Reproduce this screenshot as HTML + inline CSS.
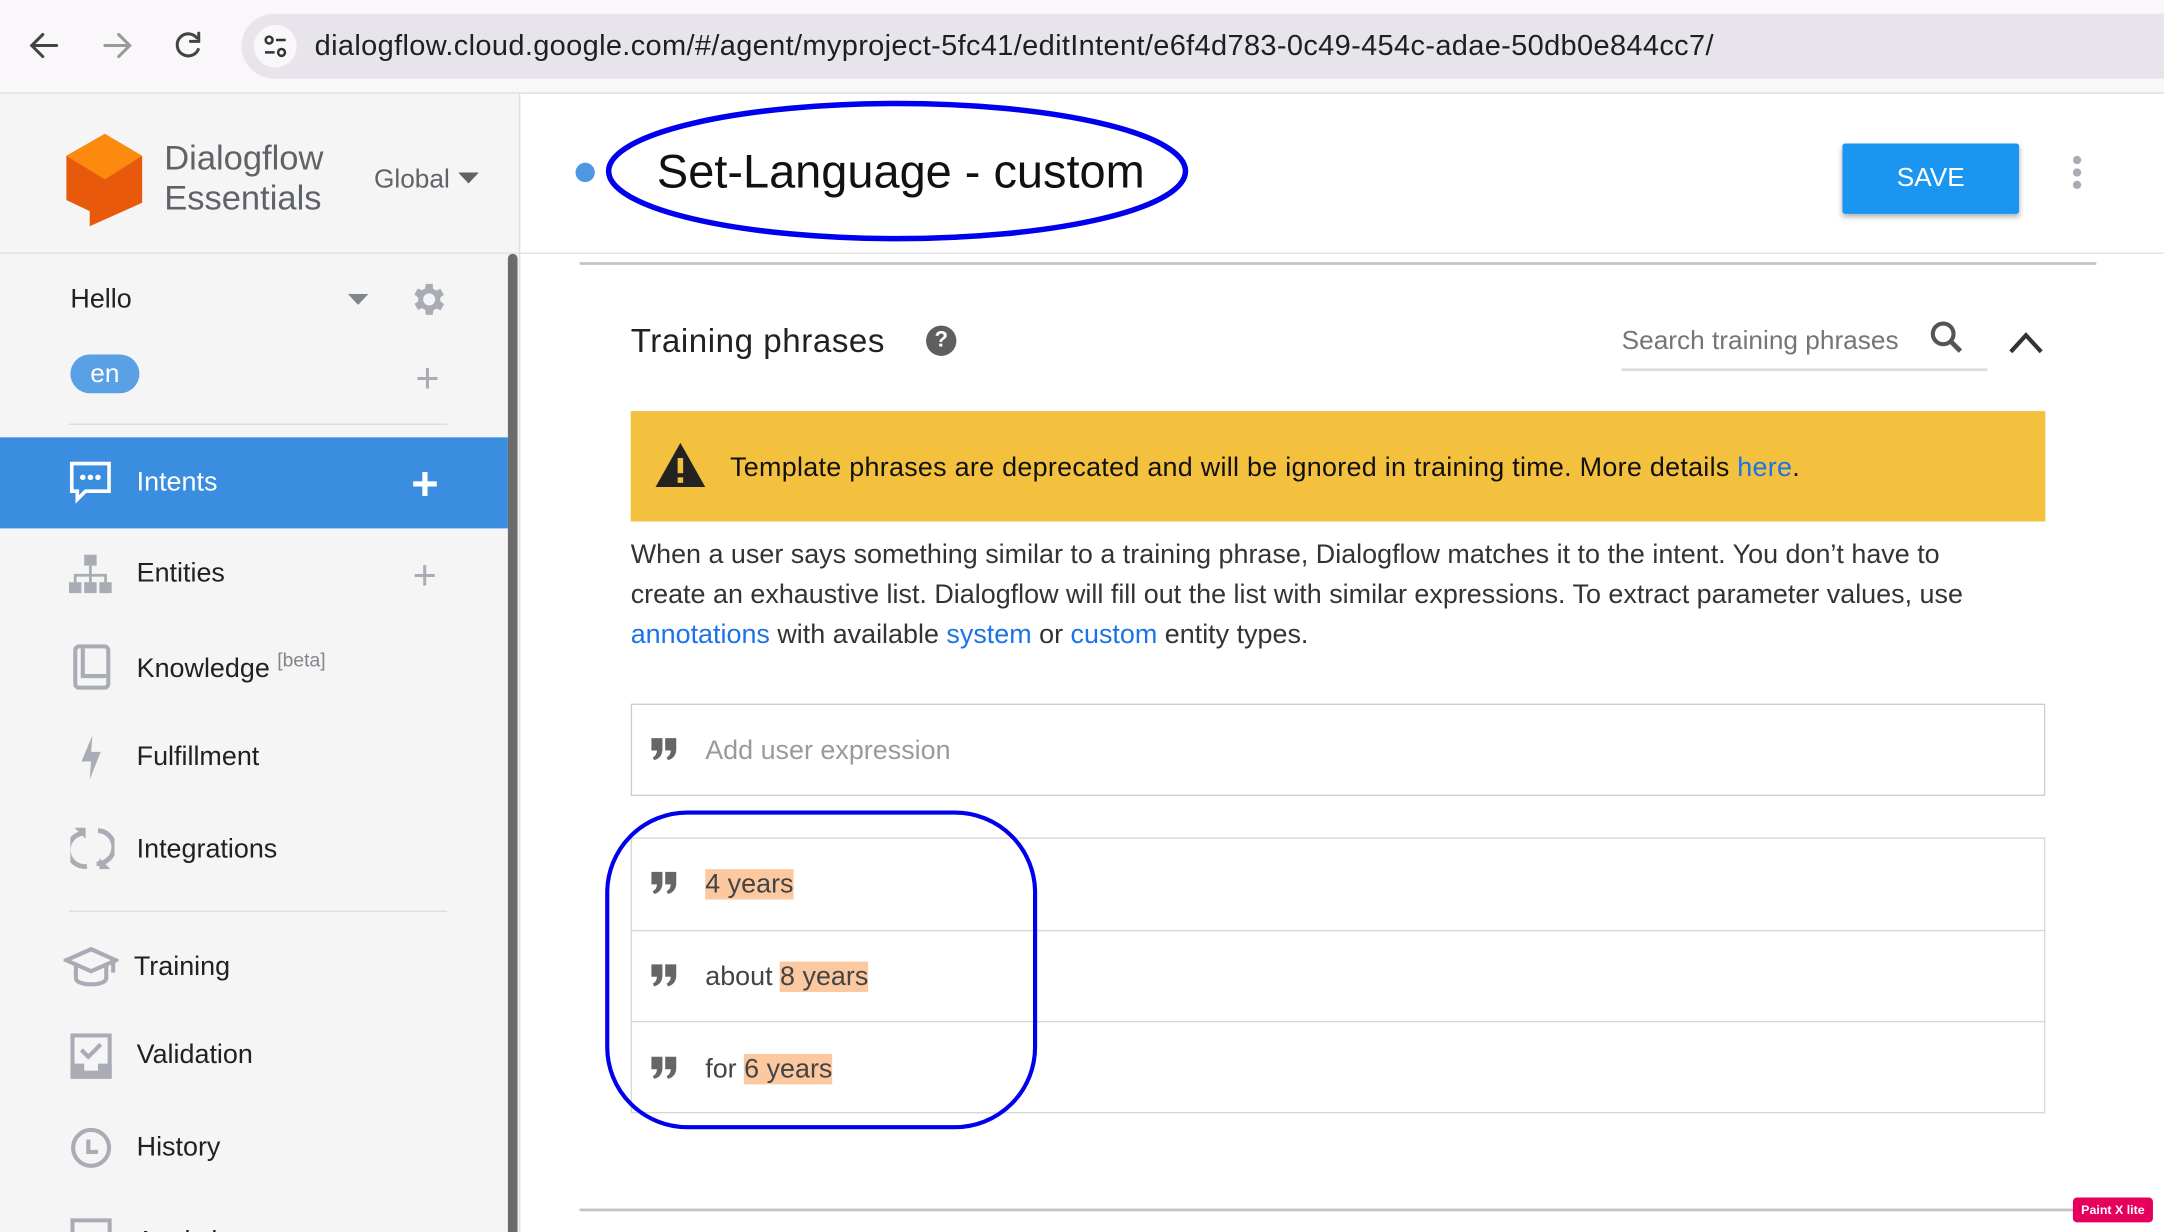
<!DOCTYPE html>
<html><head><meta charset="utf-8"><style>
html,body{margin:0;padding:0;width:2164px;height:1232px;overflow:hidden;background:#fff}
#w{position:absolute;left:0;top:0;width:1568px;height:893px;transform:scale(1.38010,1.37962);transform-origin:0 0;font-family:"Liberation Sans",sans-serif;overflow:hidden}
.a{position:absolute;white-space:nowrap}
.nav{position:absolute;left:99px;font-size:19.5px;color:#202124;transform:translateY(-45%)}
.ic{position:absolute}
.q{position:absolute;left:471px}
.hl{background:#fcc8a0}
</style></head><body><div id="w">
<svg width="0" height="0" style="position:absolute"><defs><symbol id="qq" viewBox="0 0 20 18"><path d="M1 1h8v8c0 4-2 7-6 8l-1-2c2-1 3-3 3-5H1z M11 1h8v8c0 4-2 7-6 8l-1-2c2-1 3-3 3-5h-4z" fill="#666"/></symbol></defs></svg>
<!-- browser bar -->
<div class="a" style="left:0;top:0;width:1568px;height:67px;background:#f9f7fa;border-bottom:1px solid #dedcdf"></div>
<svg class="ic" style="left:0;top:0" width="175" height="67"><g stroke="#444" stroke-width="2.2" fill="none" stroke-linecap="round"><path d="M41 33H24M31 25l-8 8 8 8"/></g><g stroke="#999" stroke-width="2.2" fill="none" stroke-linecap="round"><path d="M76 33h17M86 25l8 8-8 8"/></g><g stroke="#444" stroke-width="2.2" fill="none"><path d="M143 28a8 8 0 1 0 1 7"/><path d="M144 24v6h-6" stroke-linecap="round"/></g></svg>
<div class="a" style="left:175px;top:10px;width:1420px;height:47px;border-radius:24px;background:#e7e5eb"></div>
<div class="a" style="left:184px;top:18px;width:31px;height:31px;border-radius:50%;background:#f9f7fa"></div>
<svg class="ic" style="left:184px;top:18px" width="31" height="31"><g stroke="#333" stroke-width="1.8" fill="none"><circle cx="11" cy="11" r="2.5"/><path d="M16 11h7M8 20h7"/><circle cx="20" cy="20" r="2.5"/></g></svg>
<div class="a" style="left:228px;top:22px;font-size:21px;color:#1f1f1f;letter-spacing:0.25px">dialogflow.cloud.google.com/#/agent/myproject-5fc41/editIntent/e6f4d783-0c49-454c-adae-50db0e844cc7/</div>
<!-- sidebar -->
<div class="a" style="left:0;top:68px;width:376px;height:825px;background:#f5f5f5;border-right:1px solid #e0e0e0"></div>
<div class="a" style="left:0;top:183px;width:376px;height:1px;background:#e0e0e0"></div>
<svg class="ic" style="left:48px;top:97px" width="56" height="70"><path d="M28 0L55 16V50L17 67V56L0 48V16Z" fill="#e8590c"/><path d="M28 0L55 16 28 33 0 16Z" fill="#fb8a0f"/></svg>
<div class="a" style="left:119px;top:101px;font-size:25px;line-height:29px;color:#5f6368">Dialogflow<br>Essentials</div>
<div class="a" style="left:271px;top:120px;font-size:19px;color:#5f6368">Global</div>
<svg class="ic" style="left:332px;top:125px" width="16" height="10"><path d="M0 0h15L7.5 8z" fill="#5f6368"/></svg>
<div class="a" style="left:51px;top:206px;font-size:19.5px;color:#202124">Hello</div>
<svg class="ic" style="left:252px;top:213px" width="16" height="10"><path d="M0 0h15L7.5 8z" fill="#80868b"/></svg>
<svg class="ic" style="left:296px;top:202px" width="30" height="30" viewBox="0 0 24 24"><path fill="#a9acb4" d="M19.4 13a7.5 7.5 0 0 0 0-2l2.1-1.6-2-3.5-2.5 1a7 7 0 0 0-1.7-1L15 3h-4l-.4 2.7a7 7 0 0 0-1.7 1l-2.5-1-2 3.5L6.6 11a7.5 7.5 0 0 0 0 2l-2.1 1.6 2 3.5 2.5-1a7 7 0 0 0 1.7 1L11 21h4l.4-2.7a7 7 0 0 0 1.7-1l2.5 1 2-3.5zM13 15.5a3.5 3.5 0 1 1 0-7 3.5 3.5 0 0 1 0 7z" transform="translate(-1 0)"/></svg>
<div class="a" style="left:51px;top:257px;width:50px;height:28px;border-radius:14px;background:#5aa0e5;color:#fff;font-size:19px;text-align:center;line-height:29px">en</div>
<div class="a" style="left:301px;top:260px;font-size:30px;line-height:30px;color:#a9acb4">+</div>
<div class="a" style="left:50px;top:307px;width:274px;height:1px;background:#dcdcdc"></div>
<div class="a" style="left:0;top:317px;width:368px;height:66px;background:#3b8edf"></div>
<svg class="ic" style="left:50px;top:334px" width="31" height="31" viewBox="0 0 31 31"><path d="M2 2h27v20H12l-6 6v-6H2z" fill="none" stroke="#fff" stroke-width="2.6"/><circle cx="10" cy="12" r="2" fill="#fff"/><circle cx="15.5" cy="12" r="2" fill="#fff"/><circle cx="21" cy="12" r="2" fill="#fff"/></svg>
<div class="nav" style="top:349px;color:#fff">Intents</div>
<div class="a" style="left:298px;top:334px;font-size:34px;line-height:34px;color:#fff;font-weight:bold">+</div>
<svg class="ic" style="left:50px;top:402px" width="31" height="28"><g fill="#a9acb4"><rect x="11" y="0" width="9" height="8"/><rect x="0" y="20" width="9" height="8"/><rect x="11" y="20" width="9" height="8"/><rect x="22" y="20" width="9" height="8"/><path d="M14.5 8h2v6h11v6h-2v-4h-9v4h-2v-4h-9v4h-2v-6h11z"/></g></svg>
<div class="nav" style="top:415px">Entities</div>
<div class="a" style="left:299px;top:403px;font-size:30px;line-height:30px;color:#a9acb4">+</div>
<svg class="ic" style="left:53px;top:467px" width="27" height="33"><rect x="1.5" y="1.5" width="24" height="30" rx="3" fill="none" stroke="#a9acb4" stroke-width="3"/><path d="M7 3v20h17" fill="none" stroke="#a9acb4" stroke-width="3"/></svg>
<div class="nav" style="top:482px">Knowledge <sup style="font-size:14px;color:#80868b">[beta]</sup></div>
<svg class="ic" style="left:58px;top:533px" width="16" height="32"><path d="M9 0L1 19h7l-1 13 8-20H8z" fill="#a9acb4"/></svg>
<div class="nav" style="top:548px">Fulfillment</div>
<svg class="ic" style="left:51px;top:598px" width="32" height="34"><g fill="none" stroke="#a9acb4" stroke-width="3.5"><path d="M9 6a12 12 0 0 0 3 24"/><path d="M20 4a12 12 0 0 1-1 24"/></g><path d="M3 2h8v8z M29 32h-8v-8z" fill="#a9acb4"/></svg>
<div class="nav" style="top:615px">Integrations</div>
<div class="a" style="left:50px;top:660px;width:274px;height:1px;background:#dcdcdc"></div>
<svg class="ic" style="left:46px;top:686px" width="40" height="33"><path d="M20 2L2 10l18 8 18-8z" fill="none" stroke="#a9acb4" stroke-width="3"/><path d="M9 14v9c0 6 22 6 22 0v-9" fill="none" stroke="#a9acb4" stroke-width="3"/><path d="M36 10v9" stroke="#a9acb4" stroke-width="3"/></svg>
<div class="nav" style="left:97px;top:700px">Training</div>
<svg class="ic" style="left:51px;top:749px" width="30" height="33"><rect x="1.5" y="1.5" width="27" height="30" fill="none" stroke="#a9acb4" stroke-width="3"/><path d="M0 22h10v5h10v-5h10v11H0z" fill="#a9acb4"/><path d="M8 12l5 5 9-9" fill="none" stroke="#a9acb4" stroke-width="3"/></svg>
<div class="nav" style="top:764px">Validation</div>
<svg class="ic" style="left:51px;top:816px" width="30" height="33"><circle cx="15" cy="16" r="13" fill="none" stroke="#a9acb4" stroke-width="3"/><path d="M13 10v9h7" fill="none" stroke="#a9acb4" stroke-width="3"/></svg>
<div class="nav" style="top:831px">History</div>
<svg class="ic" style="left:51px;top:883px" width="30" height="12"><rect x="1.5" y="1.5" width="27" height="30" fill="none" stroke="#a9acb4" stroke-width="3"/></svg>
<div class="nav" style="top:899px">Analytics</div>
<div class="a" style="left:368px;top:184px;width:7px;height:720px;border-radius:4px;background:#6b6b6b"></div>
<!-- main header -->
<div class="a" style="left:377px;top:183px;width:1191px;height:1px;background:#e0e0e0"></div>
<div class="a" style="left:417px;top:118px;width:14px;height:14px;border-radius:50%;background:#4e97e3"></div>
<div class="a" style="left:476px;top:106px;font-size:34px;color:#111">Set-Language - custom</div>
<svg class="ic" style="left:430px;top:70px" width="440" height="112"><ellipse cx="220" cy="54" rx="209" ry="49" fill="none" stroke="#0000ee" stroke-width="4"/></svg>
<div class="a" style="left:1335px;top:104px;width:128px;height:51px;background:#1a96f0;border-radius:2px;box-shadow:0 2px 4px rgba(0,0,0,.3);color:#fff;font-size:19px;text-align:center;line-height:52px">SAVE</div>
<svg class="ic" style="left:1500px;top:112px" width="10" height="26"><circle cx="5" cy="4" r="3" fill="#a9acb4"/><circle cx="5" cy="13" r="3" fill="#a9acb4"/><circle cx="5" cy="22" r="3" fill="#a9acb4"/></svg>
<div class="a" style="left:420px;top:190px;width:1099px;height:2px;background:#cbc1c5"></div>
<!-- training phrases -->
<div class="a" style="left:457px;top:234px;font-size:24px;color:#202124;letter-spacing:0.4px">Training phrases</div>
<div class="a" style="left:671px;top:236px;width:22px;height:22px;border-radius:50%;background:#5f5f5f;color:#fff;font-size:16px;font-weight:bold;text-align:center;line-height:22px">?</div>
<div class="a" style="left:1175px;top:237px;font-size:19px;color:#757575">Search training phrases</div>
<div class="a" style="left:1175px;top:267px;width:265px;height:2px;background:#dcdcdc"></div>
<svg class="ic" style="left:1398px;top:232px" width="26" height="26"><circle cx="10" cy="10" r="7.5" fill="none" stroke="#555" stroke-width="3"/><path d="M15.5 15.5l7 7" stroke="#555" stroke-width="3.5"/></svg>
<svg class="ic" style="left:1454px;top:238px" width="28" height="20"><path d="M3 17L14 5l11 12" fill="none" stroke="#333" stroke-width="3"/></svg>
<div class="a" style="left:457px;top:298px;width:1025px;height:80px;background:#f3c13e"></div>
<svg class="ic" style="left:474px;top:320px" width="38" height="34"><path d="M19 1L37 33H1z" fill="#222"/><rect x="17" y="12" width="4" height="11" fill="#f3c13e"/><rect x="17" y="26" width="4" height="4" fill="#f3c13e"/></svg>
<div class="a" style="left:529px;top:328px;font-size:19.5px;color:#111;letter-spacing:0.2px">Template phrases are deprecated and will be ignored in training time. More details <span style="color:#1a73e8">here</span>.</div>
<div class="a" style="left:457px;top:388px;font-size:19.5px;line-height:29px;color:#333">When a user says something similar to a training phrase, Dialogflow matches it to the intent. You don’t have to<br>create an exhaustive list. Dialogflow will fill out the list with similar expressions. To extract parameter values, use<br><span style="color:#1a73e8">annotations</span> with available <span style="color:#1a73e8">system</span> or <span style="color:#1a73e8">custom</span> entity types.</div>
<div class="a" style="left:457px;top:510px;width:1023px;height:65px;border:1px solid #d0d0d0"></div>
<svg class="q" style="top:534px" width="20" height="18"><use href="#qq"/></svg>
<div class="a" style="left:511px;top:533px;font-size:19.5px;color:#9a9a9a">Add user expression</div>
<div class="a" style="left:457px;top:607px;width:1023px;height:198px;border:1px solid #d6d6d6"></div>
<div class="a" style="left:457px;top:674px;width:1025px;height:1px;background:#d6d6d6"></div>
<div class="a" style="left:457px;top:740px;width:1025px;height:1px;background:#d6d6d6"></div>
<svg class="q" style="top:631px" width="20" height="18"><use href="#qq"/></svg>
<svg class="q" style="top:698px" width="20" height="18"><use href="#qq"/></svg>
<svg class="q" style="top:765px" width="20" height="18"><use href="#qq"/></svg>
<div class="a" style="left:511px;top:628px;font-size:19.5px;line-height:27px;color:#444"><span class="hl">4 years</span></div>
<div class="a" style="left:511px;top:695px;font-size:19.5px;line-height:27px;color:#444">about <span class="hl">8 years</span></div>
<div class="a" style="left:511px;top:762px;font-size:19.5px;line-height:27px;color:#444">for <span class="hl">6 years</span></div>
<svg class="ic" style="left:436px;top:585px" width="320" height="238"><rect x="4" y="4" width="310" height="228" rx="58" fill="none" stroke="#0000ee" stroke-width="3"/></svg>
<div class="a" style="left:420px;top:876px;width:1099px;height:2px;background:#cbc1c5"></div>
<div class="a" style="left:1502px;top:868px;width:58px;height:18px;background:#e6005c;color:#fff;font-size:9px;font-weight:bold;text-align:center;line-height:18px;border-radius:3px">Paint X lite</div>
</div></body></html>
